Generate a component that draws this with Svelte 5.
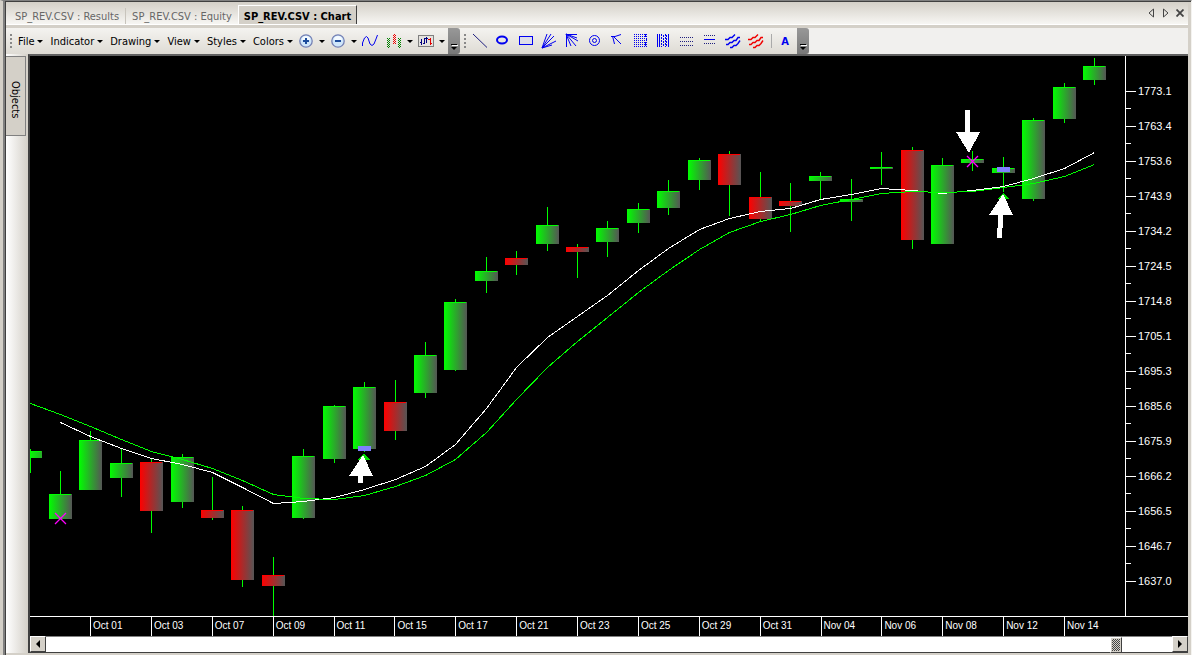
<script>
  // Pixel rows of the price pane
  const PLOT = { x: 30, y: 56, width: 1095, height: 560 };
  const BAR_STEP = 30.417;

  const tabs = ['SP_REV.CSV : Results', 'SP_REV.CSV : Equity', 'SP_REV.CSV : Chart'];
  const menus = ['File', 'Indicator', 'Drawing', 'View', 'Styles', 'Colors'];
  const chartTools = ['zoom-in', 'zoom-out', 'wave', 'bars', 'panel'];
  const drawTools = [
    'line', 'ellipse', 'rectangle', 'fan', 'gann', 'circles', 'angle',
    'grid', 'columns', 'levels', 'channel', 'waves', 'red-waves'
  ];

  const prices = [
    '1773.1', '1763.4', '1753.6', '1743.9', '1734.2', '1724.5', '1714.8', '1705.1',
    '1695.3', '1685.6', '1675.9', '1666.2', '1656.5', '1646.7', '1637.0'
  ];
  const dates = [
    'Oct 01', 'Oct 03', 'Oct 07', 'Oct 09', 'Oct 11', 'Oct 15', 'Oct 17', 'Oct 21', 'Oct 23',
    'Oct 25', 'Oct 29', 'Oct 31', 'Nov 04', 'Nov 06', 'Nov 08', 'Nov 12', 'Nov 14'
  ];

  // [high, body top, body bottom, low, direction]
  const bars = [
    [449, 451, 458, 473, 'up'], [471, 494, 519, 519, 'up'], [431, 440, 490, 490, 'up'],
    [449, 463, 478, 497, 'up'], [459, 462, 511, 533, 'down'], [454, 457, 502, 508, 'up'],
    [477, 510, 518, 520, 'down'], [506, 510, 580, 587, 'down'], [557, 575, 586, 616, 'down'],
    [449, 456, 518, 519, 'up'], [405, 406, 459, 463, 'up'], [382, 387, 449, 452, 'up'],
    [380, 402, 431, 440, 'down'], [342, 355, 393, 398, 'up'], [299, 302, 370, 371, 'up'],
    [257, 271, 281, 293, 'up'], [251, 258, 265, 275, 'down'], [207, 225, 244, 251, 'up'],
    [244, 247, 252, 278, 'down'], [221, 228, 242, 257, 'up'], [203, 209, 223, 233, 'up'],
    [180, 191, 208, 215, 'up'], [158, 160, 180, 190, 'up'], [151, 154, 185, 216, 'down'],
    [172, 197, 219, 221, 'down'], [183, 201, 206, 232, 'down'], [172, 176, 181, 200, 'up'],
    [179, 199, 202, 221, 'up'], [152, 167, 169, 185, 'up'], [147, 150, 240, 249, 'down'],
    [158, 165, 244, 244, 'up'], [151, 159, 163, 171, 'up'], [157, 168, 173, 192, 'up'],
    [118, 120, 199, 201, 'up'], [83, 87, 119, 123, 'up'], [58, 66, 80, 85, 'up']
  ];

  // Moving averages, one value per bar
  const slow = [
    403, 414, 426, 439, 451, 459, 468, 480, 494, 498, 499, 495, 486, 475, 459, 432, 399, 367,
    341, 317, 292, 270, 249, 232, 221, 214, 205, 199, 193, 191, 192, 191, 187, 183, 176, 164
  ];
  const fast = [
    null, 422, 436, 448, 458, 464, 472, 487, 503, 501, 497, 489, 479, 466, 444, 408, 367, 337,
    316, 295, 270, 248, 229, 218, 211, 208, 199, 194, 188, 190, 193, 190, 186, 178, 168, 152
  ];

  let activeTab = $state(2);
  let position = $state(955);

  function barX(i) {
    return Math.floor(PLOT.x + i * BAR_STEP);
  }

  // The first bar is cut off by the left edge of the pane
  function bodyX(i) {
    return Math.max(PLOT.x, barX(i) - 11);
  }

  function toPoints(values) {
    return values
      .map((v, i) => (v === null ? '' : `${barX(i) + 0.5},${v + 0.5}`))
      .join(' ');
  }
</script>

{#snippet icon(name)}
  <svg class="icon" width="16" height="16" viewBox="0 0 16 16" fill="none" stroke="#0000f0" shape-rendering="crispEdges">
    {#if name === 'zoom-in' || name === 'zoom-out'}
      <g shape-rendering="auto">
        <circle cx="8" cy="8" r="6.2" fill="#cfe6fa" stroke="#7480b4" stroke-width="1.3" />
        <path d="M4 7a4 4 0 0 1 8 0" fill="#f4faff" stroke="none" />
      </g>
      <path d="M5 8H11" stroke="#1c4c9c" stroke-width="2" />
      {#if name === 'zoom-in'}
        <path d="M8 5V11" stroke="#1c4c9c" stroke-width="2" />
      {/if}
    {:else if name === 'wave'}
      <path d="M.5 13V10L2.5 5L4.5 3.5L6 5L8 11L10 12.5L12 11L14 6L15.5 2" shape-rendering="auto" />
    {:else if name === 'bars'}
      <g stroke="none" fill="#008000">
        {#each [5, 7, 9, 11, 13] as y}
          <path d="M1 {y}h1v1h-1zM3 {y}h1v1h-1zM2 {y + 1}h1v1h-1z" />
          <path d="M12 {y}h1v1h-1zM14 {y}h1v1h-1zM13 {y + 1}h1v1h-1z" />
        {/each}
      </g>
      <g stroke="none" fill="#f00000">
        {#each [1, 3, 5, 7, 9] as y}
          <path d="M8 {y}h1v1h-1zM7 {y + 1}h1v1h-1zM9 {y + 1}h1v1h-1z" />
        {/each}
      </g>
    {:else if name === 'panel'}
      <rect x=".5" y="2.5" width="15" height="11" fill="#e4e2de" stroke="#808080" />
      <path d="M3.5 6V12M2 9.5H4M6.5 5V11M5 10.5H7M8.5 4V10M7 5.5H10" stroke="#000080" />
      <path d="M12.5 5V12M10 6.5H12M12 10.5H14" stroke="#e00000" />
    {:else if name === 'line'}
      <path d="M1 1L15 14.5" stroke="#202080" shape-rendering="auto" />
    {:else if name === 'ellipse'}
      <ellipse cx="7" cy="7" rx="5" ry="3.5" stroke-width="2" shape-rendering="auto" />
    {:else if name === 'rectangle'}
      <rect x="1.5" y="3.5" width="13" height="8" fill="#dddde8" />
    {:else if name === 'fan'}
      <path d="M1 15L6 1M1 15L10 1M1 15L13 3M1 15L15 8M1 15L11 12" shape-rendering="auto" />
    {:else if name === 'gann'}
      <path d="M2.5 14V1.5H13M2 1L7 13M2 1L12 13M2 1L14 8M2 1L13 5" shape-rendering="auto" />
    {:else if name === 'circles'}
      <g shape-rendering="auto"><circle cx="7.5" cy="7.5" r="5" /><circle cx="7.5" cy="7.5" r="2" /></g>
    {:else if name === 'angle'}
      <path d="M1 3.5H5L11 1.5M2.5 3L4.5 11M3 3L11 11" shape-rendering="auto" />
    {:else if name === 'grid'}
      {#each [1, 3, 5, 7, 9, 11, 13] as y}
        <path d="M1 {y + 0.5}H14" stroke-dasharray="1 1" />
      {/each}
      <path d="M12.5 1V4M13.5 5V8M12.5 9V13" />
    {:else if name === 'columns'}
      <path d="M1.5 1V14M3.5 1V14M12.5 1V14" />
      <path d="M5.5 1V14M7.5 2V14M9.5 1V14M10.5 2V14" stroke-dasharray="2 1" />
    {:else if name === 'levels'}
      <path d="M1 4.5H14M1 8.5H14M1 12.5H14" stroke="#202080" stroke-dasharray="1 1" />
    {:else if name === 'channel'}
      <path d="M2 2.5H13M2 10.5H13" stroke="#202080" stroke-dasharray="1 1" />
      <path d="M2 6.5H13" stroke="#0000f0" />
    {:else if name === 'waves' || name === 'red-waves'}
      <path
        d="M0 6.5H3L5 4.5H7L10 1.5M1 11.5H3L5 9.5H7L9 7.5H11L13 4.5H15M5 14.5H7L9 12.5H11L13 10.5L15 7.5"
        stroke={name === 'waves' ? '#0000f0' : '#f00000'}
        stroke-width="1.4"
        shape-rendering="auto"
      />
    {/if}
  </svg>
{/snippet}

<div class="window">
  <header class="tabbar">
    <nav class="tabs">
      {#each tabs as tab, i}
        <button class="tab" class:active={activeTab === i} onclick={() => (activeTab = i)}>{tab}</button>
      {/each}
    </nav>
    <div class="tab-controls">
      <button aria-label="Previous tab">
        <svg width="7" height="10" viewBox="0 0 7 10" fill="none" stroke="#444"><path d="M5.5 1V9L1 5Z" /></svg>
      </button>
      <button aria-label="Next tab">
        <svg width="7" height="10" viewBox="0 0 7 10" fill="none" stroke="#444"><path d="M1.5 1V9L6 5Z" /></svg>
      </button>
      <button aria-label="Close tab">
        <svg width="8" height="8" viewBox="0 0 8 8" stroke="#444" stroke-width="1.8"><path d="M.5 .5L7.5 7.5M7.5 .5L.5 7.5" /></svg>
      </button>
    </div>
  </header>

  <div class="toolbars">
    <div class="toolbar" role="toolbar" aria-label="Chart">
      <span class="grip"></span>
      <div class="menus">
        {#each menus as menu}
          <button class="menu">{menu}<span class="caret"></span></button>
        {/each}
      </div>
      {#each chartTools as tool}
        <button class="tool" class:plain={tool === 'wave'} aria-label={tool}>
          {@render icon(tool)}
          {#if tool !== 'wave'}<span class="caret"></span>{/if}
        </button>
      {/each}
      <button class="overflow" aria-label="More chart tools"><span class="bar"></span><span class="caret"></span></button>
    </div>
    <div class="toolbar" role="toolbar" aria-label="Drawing">
      <span class="grip"></span>
      {#each drawTools as tool}
        <button class="draw" aria-label={tool}>{@render icon(tool)}</button>
      {/each}
      <span class="separator"></span>
      <button class="letter">A</button>
      <button class="overflow" aria-label="More drawing tools"><span class="bar"></span><span class="caret"></span></button>
    </div>
  </div>

  <div class="workspace">
    <aside class="dock">
      <button class="dock-tab">Objects</button>
    </aside>

    <main class="chart">
      <div class="pane">
        <svg
          class="plot"
          viewBox="{PLOT.x} {PLOT.y} {PLOT.width} {PLOT.height}"
          preserveAspectRatio="none"
          shape-rendering="crispEdges"
          role="img"
          aria-label="SP_REV.CSV candlestick chart"
        >
          <defs>
            <linearGradient id="up"><stop stop-color="#00ff00" /><stop offset="1" stop-color="#555" /></linearGradient>
            <linearGradient id="down"><stop stop-color="#ff0000" /><stop offset="1" stop-color="#555" /></linearGradient>
            <linearGradient id="cut"><stop stop-color="#00ff00" /><stop offset="1" stop-color="#2aaa2a" /></linearGradient>
          </defs>

          {#each bars as [high, top, bottom, low, direction], i}
            {@const left = bodyX(i)}
            {@const right = barX(i) + 12}
            <rect x={barX(i)} y={high} width="1" height={low - high} fill="#00ff00" />
            <rect x={left} y={top} width={right - left} height={bottom - top} fill="url(#{i === 0 ? 'cut' : direction})" />
            <rect x={left} y={top} width={right - left - 1} height="1" fill={direction === 'up' ? '#00ff00' : '#ff0000'} />
          {/each}

          <polyline points={toPoints(fast)} fill="none" stroke="#fff" />
          <polyline points={toPoints(slow)} fill="none" stroke="#00ff00" />

          <!-- entries -->
          <path d="M364 453L370 460H358ZM1003 193L1009 199H997Z" fill="#00e000" />
          <path d="M358 446h13v5h-13zM997 167h13v5h-13z" fill="#8080ff" />
          <!-- exits -->
          <path
            d="M55 513L66 524M66 513L55 524M967 156L978 167M978 156L967 167"
            stroke="#ff00ff"
            stroke-width="1.3"
            shape-rendering="auto"
          />
          <!-- annotation arrows -->
          <g fill="#fff">
            <path d="M363 455L373 476H363V483H358V476H349Z" />
            <path d="M965 110H970V132H980L969 153L956 132H965Z" />
            <path d="M1003 194L1013 215H1003V228H1002V238H997V228H998V215H989Z" />
          </g>
        </svg>

        <div class="prices">
          {#each prices as price}
            <div class="price">{price}</div>
          {/each}
        </div>
      </div>

      <div class="dates">
        {#each dates as date}
          <div class="date">{date}</div>
        {/each}
      </div>

      <div class="scroller">
        <button class="step" aria-label="Scroll left"><span class="left"></span></button>
        <input type="range" min="0" max="1000" bind:value={position} aria-label="Chart position" />
        <button class="step" aria-label="Scroll right"><span class="right"></span></button>
      </div>
    </main>
  </div>
</div>

<style>
  :global(body) {
    margin: 0;
    background: #d4d0c8;
  }

  .window {
    box-sizing: border-box;
    min-height: 100vh;
    display: flex;
    flex-direction: column;
    border-left: 3px solid #d4d0c8;
    border-top: 1px solid #808080;
    border-right: 1px solid #f4f3f0;
    box-shadow: inset 2px 0 #808080, inset 3px 0 #404040, inset 0 1px #404040;
    padding: 1px 3px 3px 3px;
    background: #d4d0c8;
    font-family: 'DejaVu Sans Condensed', 'DejaVu Sans', sans-serif;
    font-size: 11px;
    color: #000;
  }

  button {
    margin: 0;
    padding: 0;
    border: 0;
    background: none;
    font: inherit;
    color: inherit;
  }

  /* Document tabs */
  .tabbar {
    height: 22px;
    display: flex;
    justify-content: space-between;
    border-bottom: 1px solid #fff;
    background: linear-gradient(#d4d0c8, #f7f6f3);
  }

  .tabs {
    display: flex;
    align-items: flex-end;
    padding-left: 3px;
  }

  .tab {
    height: 16px;
    padding: 2px 6px 0;
    line-height: 14px;
    color: #666;
    white-space: nowrap;
  }

  .tab:first-child {
    border-right: 1px solid #c8c4bc;
  }

  .tab.active {
    height: 19px;
    padding: 4px 5px 0;
    border-top: 1px solid #fff;
    border-left: 1px solid #fff;
    border-right: 1px solid #404040;
    background: #d4d0c8;
    color: #000;
    font-weight: bold;
  }

  .tab-controls {
    display: flex;
    align-items: center;
    gap: 7px;
    padding-right: 4px;
  }

  .tab-controls button {
    display: flex;
  }

  /* Toolbars */
  .toolbars {
    height: 26px;
    display: flex;
    margin-top: 3px;
    background: #f1f0ee;
  }

  .toolbar {
    display: flex;
    align-items: center;
    background: linear-gradient(#f4f3f0, #dedbd4);
  }

  .grip {
    width: 2px;
    height: 14px;
    margin: 0 3px 0 4px;
    background: repeating-linear-gradient(#888 0 2px, transparent 2px 4px);
  }

  .menus {
    width: 281px;
    display: flex;
    justify-content: space-between;
  }

  .menu {
    display: flex;
    align-items: center;
    gap: 3px;
    height: 22px;
    padding: 0 3px;
  }

  .caret {
    border: 3px solid transparent;
    border-top-color: #000;
    border-bottom: 0;
  }

  .icon {
    display: block;
    flex: none;
  }

  .tool {
    display: flex;
    align-items: center;
    justify-content: space-between;
    width: 32px;
    height: 22px;
    padding: 0 3px 0 2px;
  }

  .tool.plain {
    width: 24px;
  }

  .draw {
    display: flex;
    align-items: center;
    width: 23px;
    height: 22px;
    padding-left: 3px;
  }

  .letter {
    width: 24px;
    height: 22px;
    color: #0000f0;
    font-weight: bold;
  }

  .separator {
    width: 1px;
    height: 14px;
    margin: 0 1px 0 3px;
    background: #aaa;
  }

  .overflow {
    align-self: stretch;
    display: flex;
    flex-direction: column;
    align-items: center;
    justify-content: flex-end;
    gap: 2px;
    width: 12px;
    padding-bottom: 4px;
    border-radius: 0 3px 3px 0;
    background: linear-gradient(#989898, #787878);
  }

  .overflow .bar {
    width: 6px;
    height: 1px;
    background: #000;
    box-shadow: 1px 1px #fff;
  }

  /* Workspace */
  .workspace {
    flex: 1;
    display: flex;
  }

  .dock {
    width: 22px;
    background: linear-gradient(90deg, #fff, #d4d0c8);
  }

  .dock-tab {
    box-sizing: border-box;
    width: 20px;
    height: 80px;
    margin-top: 2px;
    padding-top: 8px;
    border: 1px solid #808080;
    border-left: 0;
    background: #d4d0c8;
    writing-mode: vertical-rl;
  }

  .chart {
    flex: 1;
    min-width: 0;
    display: flex;
    flex-direction: column;
    border: solid #404040;
    border-width: 2px 0 1px 2px;
    border-top-color: #606060;
    background: #000;
    color: #fff;
    font-family: 'Liberation Sans', Arial, sans-serif;
  }

  .pane {
    flex: 1;
    display: flex;
    min-height: 560px;
  }

  .plot {
    flex: 1;
    min-width: 0;
    height: auto;
  }

  .prices {
    box-sizing: border-box;
    width: 63px;
    display: flex;
    flex-direction: column;
    padding: 18px 0 17px;
    border-left: 1px solid #fff;
  }

  .price {
    flex: 1;
    display: flex;
    align-items: center;
    padding: 0 0 2px 12px;
    font-size: 11px;
    background:
      linear-gradient(#fff, #fff) 0 50% / 10px 1px no-repeat,
      linear-gradient(#fff, #fff) 0 100% / 5px 1px no-repeat;
  }

  .price:last-child {
    background: linear-gradient(#fff, #fff) 0 50% / 10px 1px no-repeat;
  }

  .dates {
    display: flex;
    height: 19px;
    padding-left: 60px;
    border-top: 1px solid #fff;
  }

  .date {
    box-sizing: border-box;
    flex: 1;
    padding-left: 2px;
    border-left: 1px solid #fff;
    font-size: 10px;
    line-height: 18px;
    white-space: nowrap;
  }

  .date:last-child {
    flex: 0 0 124px;
  }

  /* Scroll bar */
  .scroller {
    display: flex;
    height: 16px;
    background: #fff;
  }

  .step {
    box-sizing: border-box;
    width: 16px;
    display: flex;
    align-items: center;
    justify-content: center;
    border: 1px solid;
    border-color: #fff #404040 #404040 #fff;
    background: #d4d0c8;
  }

  .left,
  .right {
    border: 4px solid transparent;
  }

  .left {
    border-left: 0;
    border-right-color: #000;
  }

  .right {
    border-right: 0;
    border-left-color: #000;
  }

  input {
    flex: 1;
    min-width: 0;
    height: 16px;
    margin: 0;
    appearance: none;
    background: #fff;
    border-top: 1px solid #808080;
    box-sizing: border-box;
  }

  input::-webkit-slider-thumb {
    appearance: none;
    box-sizing: border-box;
    width: 12px;
    height: 16px;
    border: 1px solid;
    border-color: #fff #404040 #404040 #fff;
    background: repeating-conic-gradient(#444 0 25%, #d4d0c8 0 50%) 0 0 / 2px 2px;
    box-shadow: inset 1px 1px #d4d0c8, inset -1px -1px #d4d0c8;
  }
</style>
